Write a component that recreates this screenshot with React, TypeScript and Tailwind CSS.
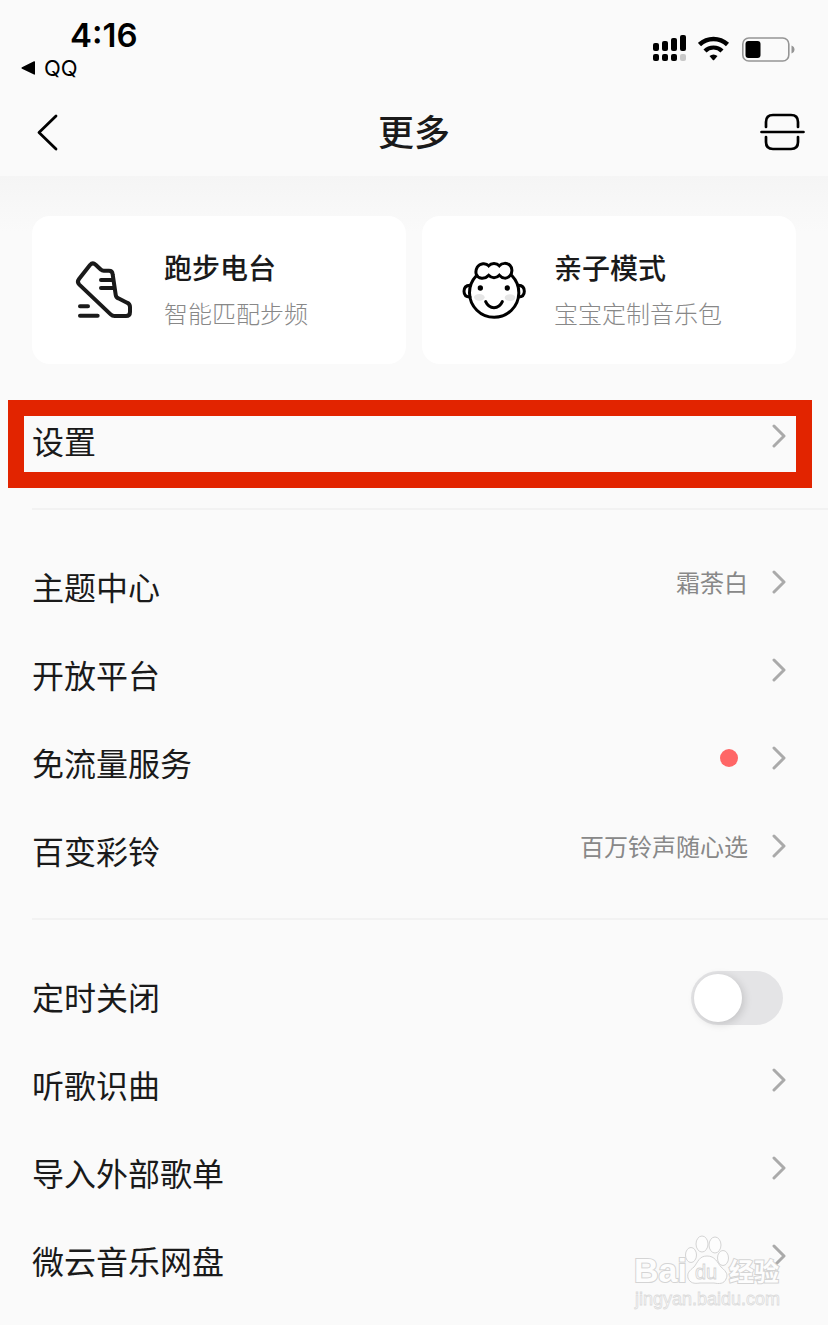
import { ReactNode } from "react";

type Row = {
  label: string;
  value?: string;
  dot?: boolean;
  toggle?: boolean;
  highlight?: boolean;
};

const groups: Row[][] = [
  [{ label: "设置", highlight: true }],
  [
    { label: "主题中心", value: "霜荼白" },
    { label: "开放平台" },
    { label: "免流量服务", dot: true },
    { label: "百变彩铃", value: "百万铃声随心选" },
  ],
  [
    { label: "定时关闭", toggle: true },
    { label: "听歌识曲" },
    { label: "导入外部歌单" },
    { label: "微云音乐网盘" },
  ],
];

const StatusBar = () => {
  return (
    <div className="flex h-22 justify-between pl-5 pr-8 font-['Inter','Liberation_Sans',sans-serif] text-black">
      <div className="pt-4">
        <div className="pl-[50px] text-[33px] leading-[38px] font-semibold">4:16</div>
        <a href="#qq" className="flex items-center gap-2 text-[22px] leading-7">
          <svg width="16" height="16" viewBox="0 0 16 16">
            <path d="M2 7.2 14 1.3q1-.4 1 .7v12q0 1-1 .6L2 8.8q-1.400-.8 0-1.600Z" />
          </svg>
          QQ
        </a>
      </div>
      <div className="flex items-start gap-3 pt-[34px]">
        {/* Signal, two sims */}
        <svg width="34" height="28" viewBox="0 0 34 28">
          <rect x="1" y="9" width="6" height="8" rx="2" />
          <rect x="10" y="7" width="6" height="10" rx="2" />
          <rect x="19" y="4" width="6" height="13" rx="2" />
          <rect x="28" y="1" width="6" height="16" rx="2" />
          <rect x="1" y="20" width="6" height="7" rx="2" />
          <rect x="10" y="20" width="6" height="7" rx="2" />
          <rect x="19" y="20" width="6" height="7" rx="2" />
          <rect x="28" y="20" width="6" height="7" rx="2" fill="#c8c8c8" />
        </svg>
        {/* Wifi */}
        <svg width="32" height="28" viewBox="0 0 32 28">
          <path d="M1.500 10.500C9.500 3 21.500 3 29.500 10.500" fill="none" stroke="#000" strokeWidth="4.500" />
          <path d="M7 17C11.500 12.300 19.500 12.300 24 17" fill="none" stroke="#000" strokeWidth="4.200" />
          <path d="M11.500 22Q15.500 19 19.500 22L16.200 26Q15.500 26.700 14.800 26Z" />
        </svg>
        {/* Battery */}
        <svg width="54" height="28" viewBox="0 0 54 28">
          <rect x="0.800" y="4" width="46" height="23" rx="6" fill="none" stroke="#959595" strokeWidth="1.600" />
          <rect x="3.500" y="7" width="15" height="17" rx="3" />
          <path d="M49.500 11.500v8q3-1.200 3-4t-3-4Z" fill="#959595" />
        </svg>
      </div>
    </div>
  );
};

const NavBar = () => {
  return (
    <div className="grid h-22 grid-cols-[1fr_auto_1fr] items-center px-[22px]">
      <button aria-label="返回" className="flex justify-self-start pl-2.5">
        <svg width="28" height="38" viewBox="0 0 28 38" fill="none" stroke="#000" strokeWidth="2.800" strokeLinecap="round" strokeLinejoin="round">
          <path d="M24 3 7 19.500l17 16.500" />
        </svg>
      </button>
      <h1 className="pb-1 text-4xl font-medium">更多</h1>
      <button aria-label="扫一扫" className="justify-self-end">
        <svg width="46" height="40" viewBox="0 0 46 40" fill="none" stroke="#000" strokeWidth="2.700" strokeLinecap="round">
          <path d="M1.500 20h42" />
          <path d="M6 15v-5q0-7 7-7h18q7 0 7 7v5" />
          <path d="M6 25v5q0 7 7 7h18q7 0 7-7v-5" />
        </svg>
      </button>
    </div>
  );
};

const ShoeIcon = () => (
  <svg width="64" height="64" viewBox="156 174 192 192" fill="none" stroke="#1a1a1a" strokeWidth="12" strokeLinecap="round" strokeLinejoin="round">
    <path d="M177 237 210 195q8-9 17-1l16 15q3 3 8 3h16q10 0 11 11l9 61q1 8 8 11l26 13q9 4 9 13v15q0 12-12 12h-34q-7 0-12-5L178 254q-8-8-1-17Z" />
    <path d="M243 240h35M243 264h39M180 319h24M180 347h53" />
  </svg>
);

const KidIcon = () => (
  <svg width="64" height="64" viewBox="156 174 192 192" fill="none" stroke="#000" strokeWidth="9" strokeLinecap="round">
    <ellipse cx="208" cy="292" rx="16" ry="10" fill="#e6e6e6" stroke="none" />
    <ellipse cx="300" cy="293" rx="16" ry="10" fill="#e6e6e6" stroke="none" />
    <path d="M199 227a74 74 0 1 0 107 0" />
    <path d="M180 256q-18 1-18 18t18 17M325 256q18 1 18 18t-18 17" />
    <path d="M236 197c-8-9-26-8-34 4-8 14-5 32 13 34 10 1 16-4 21-9 9 10 23 10 32 0 9 10 23 12 32 1 9-10 6-25 0-31-8-8-24-8-32 1-8-9-24-9-32 0Z" fill="#fff" />
    <path d="M227 305q8 18 25 18t25-18" />
    <circle cx="211" cy="264" r="8" fill="#000" stroke="none" />
    <circle cx="292" cy="264" r="8" fill="#000" stroke="none" />
  </svg>
);

const Card = ({ icon, title, text }: { icon: ReactNode; title: string; text: string }) => {
  return (
    <button className="flex h-37 flex-1 items-center gap-7 rounded-[18px] bg-white pl-10 text-left">
      {icon}
      <span className="flex flex-col gap-2 pb-0.5">
        <span className="text-[28px] leading-10 font-medium">{title}</span>
        <span className="text-2xl leading-9 font-light text-[#888]">{text}</span>
      </span>
    </button>
  );
};

const Chevron = () => (
  <svg width="14" height="24" viewBox="0 0 14 24" fill="none" stroke="#aaa" strokeWidth="3" strokeLinecap="round" strokeLinejoin="round">
    <path d="M2 2l10 10L2 22" />
  </svg>
);

const ListRow = ({ row }: { row: Row }) => {
  if (row.toggle) {
    return (
      <li className="flex h-22 items-center justify-between pr-[13px]">
        <label htmlFor="timer" className="pb-1 text-[32px]">{row.label}</label>
        <input
          id="timer"
          type="checkbox"
          className="h-[54px] w-[92px] appearance-none rounded-full bg-[#e4e4e6] p-[3px] before:block before:size-12 before:rounded-full before:bg-white before:shadow-[2px_2px_8px_rgba(0,0,0,0.15)] checked:bg-green-500 checked:before:ml-auto"
        />
      </li>
    );
  }

  return (
    <li className="relative">
      <a href="#" className="flex h-22 items-center justify-between pr-2.5">
        <span className="pb-1 text-[32px]">{row.label}</span>
        <span className="flex items-center gap-6 pb-3">
          {row.value && <span className="text-2xl text-[#888]">{row.value}</span>}
          {row.dot && <span className="mr-2.5 size-[18px] rounded-full bg-[#ff6666]"></span>}
          <Chevron />
        </span>
      </a>
      {row.highlight && (
        <div className="pointer-events-none absolute top-0.5 -right-4 -bottom-0.5 -left-6 border-16 border-[#e22400]"></div>
      )}
    </li>
  );
};

const Watermark = () => (
  <svg
    className="pointer-events-none absolute right-10 bottom-3"
    width="156"
    height="80"
    viewBox="0 0 156 80"
    fill="#fdfdfd"
    stroke="#d4d4d4"
    strokeWidth="1"
    fontFamily="'Liberation Sans','Noto Sans CJK SC',sans-serif"
  >
    <g fontWeight="700" paintOrder="stroke" strokeWidth="2">
      <text x="2" y="49" fontSize="34">Bai</text>
      <text x="97" y="48" fontSize="25">经验</text>
    </g>
    <ellipse cx="59" cy="22" rx="5.500" ry="7.500" />
    <ellipse cx="70" cy="11" rx="6" ry="8" />
    <ellipse cx="83" cy="12" rx="6" ry="8" />
    <ellipse cx="91" cy="25" rx="5.500" ry="7.500" />
    <path d="M75 23c8 0 10 6 14 11 6 5 7 8 5 12-2 5-7 5-12 4H68c-6 1-10 0-12-5-1-5 1-7 6-11 4-5 5-11 13-11Z" />
    <text x="63" y="46" fontSize="20" strokeWidth="0.800">du</text>
    <text x="3" y="72" fontSize="18" fill="#fafafa" stroke="#dcdcdc" strokeWidth="0.800">
      jingyan.baidu.com
    </text>
  </svg>
);

const App = () => {
  return (
    <div className="relative min-h-screen bg-[#fafafa] font-['Noto_Sans_CJK_SC',sans-serif] text-[#1a1a1a]">
      <header>
        <StatusBar />
        <NavBar />
      </header>

      <main className="bg-[linear-gradient(#f5f5f5,#fafafa_56px)] pt-10 pb-4 pl-8">
        <div className="flex gap-4 pr-8">
          <Card icon={<ShoeIcon />} title="跑步电台" text="智能匹配步频" />
          <Card icon={<KidIcon />} title="亲子模式" text="宝宝定制音乐包" />
        </div>

        <div className="divide-y-2 divide-[#f2f2f2]">
          {groups.map((rows) => (
            <ul key={rows[0].label} className="pt-[34px] pr-8 pb-[22px] last:pb-0">
              {rows.map((row) => (
                <ListRow key={row.label} row={row} />
              ))}
            </ul>
          ))}
        </div>
      </main>

      <Watermark />
    </div>
  );
};

export default App;
